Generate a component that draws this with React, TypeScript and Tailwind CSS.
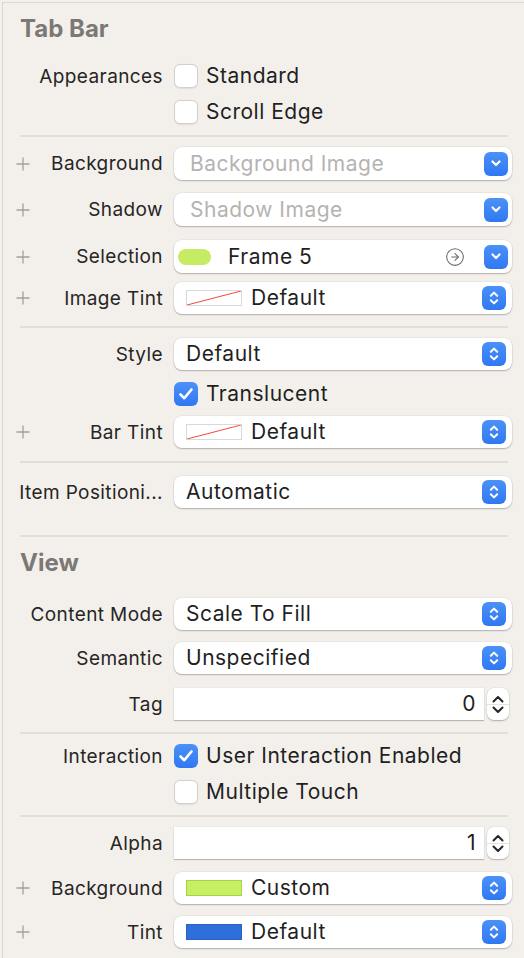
import React from 'react';
import { CircleArrowRight } from 'lucide-react';

const font = { fontFamily: 'Inter, "Noto Sans", sans-serif' };

// label column text vs. control text (controls are a touch larger)
const labelText = 'text-[19px] tracking-[0.4px] text-[#262524]';
const valueText = 'text-[21px] tracking-[0.5px] text-[#1f1f1f]';
const hintText = 'text-[21px] tracking-[0.5px] text-[#b5b3b1]';

const PlusMark = () => (
  <svg width="14" height="14" viewBox="0 0 14 14" className="ml-[13px] shrink-0">
    <path d="M7 0.5v13M0.5 7h13" stroke="#a3a09d" strokeWidth="1.3" />
  </svg>
);

const ChevronDown = () => (
  <svg width="10" height="7" viewBox="0 0 10 7">
    <path d="M1.5 1.5L5 5L8.5 1.5" stroke="white" strokeWidth="2.2" fill="none" strokeLinecap="round" strokeLinejoin="round" />
  </svg>
);

const UpDown = () => (
  <svg width="10" height="16" viewBox="0 0 10 16">
    <path d="M1.8 5.8L5 2.6L8.2 5.8M1.8 10.2L5 13.4L8.2 10.2" stroke="white" strokeWidth="2" fill="none" strokeLinecap="round" strokeLinejoin="round" />
  </svg>
);

const BlueButton = ({ kind }: { kind: 'pull' | 'pop' }) => (
  <div
    className={`w-[24px] h-[24px] rounded-[6px] bg-gradient-to-b from-[#4b91f8] to-[#2f78f2] flex items-center justify-center shrink-0 ${
      kind === 'pull' ? 'mr-[4px]' : 'mr-[6px]'
    }`}
  >
    {kind === 'pull' ? <ChevronDown /> : <UpDown />}
  </div>
);

const Row = ({
  label,
  plus,
  className = '',
  children,
}: {
  label?: string;
  plus?: boolean;
  className?: string;
  children?: React.ReactNode;
}) => (
  <div className={`flex items-center ${className}`}>
    <div className="w-[171px] shrink-0 flex items-center pr-[11px]">
      {plus && <PlusMark />}
      <span className={`ml-auto pt-[2px] whitespace-nowrap ${labelText}`}>{label}</span>
    </div>
    <div className="flex-1 min-w-0 flex items-center h-full">{children}</div>
  </div>
);

const Box = ({ children }: { children: React.ReactNode }) => (
  <div className="w-full h-full bg-white rounded-[8px] shadow-[0_1px_1.5px_rgba(0,0,0,0.25),0_0_0_0.5px_rgba(0,0,0,0.07)] flex items-center">
    {children}
  </div>
);

const Check = ({ on }: { on?: boolean }) =>
  on ? (
    <div className="w-[24px] h-[24px] rounded-[6px] bg-gradient-to-b from-[#4b91f8] to-[#2f78f2] flex items-center justify-center shrink-0">
      <svg width="16" height="14" viewBox="0 0 16 14">
        <path d="M2.5 7.5L6.3 11.2L13.5 2.5" stroke="white" strokeWidth="2.6" fill="none" strokeLinecap="round" strokeLinejoin="round" />
      </svg>
    </div>
  ) : (
    <div className="w-[24px] h-[24px] rounded-[6px] bg-white border border-[#d3d0cd] shadow-[0_0.5px_1px_rgba(0,0,0,0.08)] shrink-0" />
  );

const CheckRow = ({ label, text, on }: { label?: string; text: string; on?: boolean }) => (
  <Row label={label} className="h-[36px]">
    <Check on={on} />
    <span className={`ml-[8px] ${valueText}`}>{text}</span>
  </Row>
);

const Divider = ({ className = '' }: { className?: string }) => (
  <div className={`ml-[17px] mr-[4px] h-[2px] bg-[#e1ded9] ${className}`} />
);

const NoColor = () => (
  <div className="w-[56px] h-[16px] border border-[#d9d9d9] bg-white shrink-0 overflow-hidden">
    <svg width="54" height="14" viewBox="0 0 54 14" preserveAspectRatio="none">
      <path d="M0 14L54 0" stroke="#ef4a3c" strokeWidth="1" />
    </svg>
  </div>
);

const Swatch = ({ fill, border }: { fill: string; border: string }) => (
  <div className="w-[56px] h-[16px] shrink-0 border" style={{ backgroundColor: fill, borderColor: border }} />
);

const Title = ({ text }: { text: string }) => (
  <div className="h-[50px] flex items-center pl-[17px] pt-[2px]">
    <span className="text-[24px] font-bold text-[#7b7875]">{text}</span>
  </div>
);

const StepArrow = ({ up }: { up?: boolean }) => (
  <svg width="12" height="8" viewBox="0 0 12 8">
    <path
      d={up ? 'M1.5 6.5L6 2L10.5 6.5' : 'M1.5 1.5L6 6L10.5 1.5'}
      stroke="#262626"
      strokeWidth="2"
      fill="none"
      strokeLinecap="round"
      strokeLinejoin="round"
    />
  </svg>
);

const NumberField = ({ value }: { value: string }) => (
  <div className="w-full h-full flex items-center">
    <div className={`flex-1 h-full bg-white shadow-[0_1px_1px_rgba(0,0,0,0.22),0_0_0_0.5px_rgba(0,0,0,0.05)] flex items-center justify-end pr-[8px] ${valueText}`}>
      {value}
    </div>
    <div className="ml-[3px] mr-[3px] w-[22px] h-full rounded-[7px] bg-white shadow-[0_1px_1.5px_rgba(0,0,0,0.25),0_0_0_0.5px_rgba(0,0,0,0.07)] flex flex-col items-center">
      <div className="flex-1 flex items-end pb-[1px]">
        <StepArrow up />
      </div>
      <div className="w-full h-px bg-[#e3e3e3]" />
      <div className="flex-1 flex items-start pt-[1px]">
        <StepArrow />
      </div>
    </div>
  </div>
);

const Popup = ({ text }: { text: string }) => (
  <Box>
    <span className={`pl-[12px] flex-1 ${valueText}`}>{text}</span>
    <BlueButton kind="pop" />
  </Box>
);

const ColorPopup = ({ swatch, text }: { swatch: React.ReactNode; text: string }) => (
  <Box>
    <div className="ml-[12px]">{swatch}</div>
    <span className={`ml-[9px] flex-1 ${valueText}`}>{text}</span>
    <BlueButton kind="pop" />
  </Box>
);

export default function App() {
  return (
    <div className="w-[524px] h-[958px] bg-[#f3f0ec] pt-[2px] pl-[2px] overflow-hidden" style={font}>
      <div className="h-full border-l border-t border-[#dcd9d5] pr-[12px]">
        <Title text="Tab Bar" />
        <div className="mt-[5px]">
          <CheckRow label="Appearances" text="Standard" />
          <CheckRow text="Scroll Edge" />
        </div>
        <Divider className="mt-[5px]" />

        <Row label="Background" plus className="h-[33px] mt-[10px]">
          <Box>
            <span className={`pl-[16px] flex-1 ${hintText}`}>Background Image</span>
            <BlueButton kind="pull" />
          </Box>
        </Row>
        <Row label="Shadow" plus className="h-[33px] mt-[13px]">
          <Box>
            <span className={`pl-[16px] flex-1 ${hintText}`}>Shadow Image</span>
            <BlueButton kind="pull" />
          </Box>
        </Row>
        <Row label="Selection" plus className="h-[33px] mt-[14px]">
          <Box>
            <div className="ml-[4px] w-[33px] h-[16px] rounded-full bg-[#c6ec63] shrink-0" />
            <span className={`ml-[17px] flex-1 ${valueText}`}>Frame 5</span>
            <CircleArrowRight size={20} strokeWidth={1.3} color="#6e6c6a" className="mr-[19px]" />
            <BlueButton kind="pull" />
          </Box>
        </Row>
        <Row label="Image Tint" plus className="h-[32px] mt-[9px]">
          <ColorPopup swatch={<NoColor />} text="Default" />
        </Row>
        <Divider className="mt-[12px]" />

        <Row label="Style" className="h-[32px] mt-[10px]">
          <Popup text="Default" />
        </Row>
        <div className="mt-[6px]">
          <CheckRow text="Translucent" on />
        </div>
        <Row label="Bar Tint" plus className="h-[32px] mt-[4px]">
          <ColorPopup swatch={<NoColor />} text="Default" />
        </Row>
        <Divider className="mt-[13px]" />

        <Row label="Item Positioni..." className="h-[32px] mt-[13px]">
          <Popup text="Automatic" />
        </Row>
        <Divider className="mt-[27px]" />

        <Title text="View" />
        <Row label="Content Mode" className="h-[32px] mt-[11px]">
          <Popup text="Scale To Fill" />
        </Row>
        <Row label="Semantic" className="h-[32px] mt-[12px]">
          <Popup text="Unspecified" />
        </Row>
        <Row label="Tag" className="h-[32px] mt-[14px]">
          <NumberField value="0" />
        </Row>
        <Divider className="mt-[12px]" />

        <div className="mt-[4px]">
          <CheckRow label="Interaction" text="User Interaction Enabled" on />
          <CheckRow text="Multiple Touch" />
        </div>
        <Divider className="mt-[5px]" />

        <Row label="Alpha" className="h-[32px] mt-[10px]">
          <NumberField value="1" />
        </Row>
        <Row label="Background" plus className="h-[32px] mt-[13px]">
          <ColorPopup swatch={<Swatch fill="#c6ef63" border="#a9d24c" />} text="Custom" />
        </Row>
        <Row label="Tint" plus className="h-[32px] mt-[12px]">
          <ColorPopup swatch={<Swatch fill="#2f6fdb" border="#2a5fc0" />} text="Default" />
        </Row>
      </div>
    </div>
  );
}
